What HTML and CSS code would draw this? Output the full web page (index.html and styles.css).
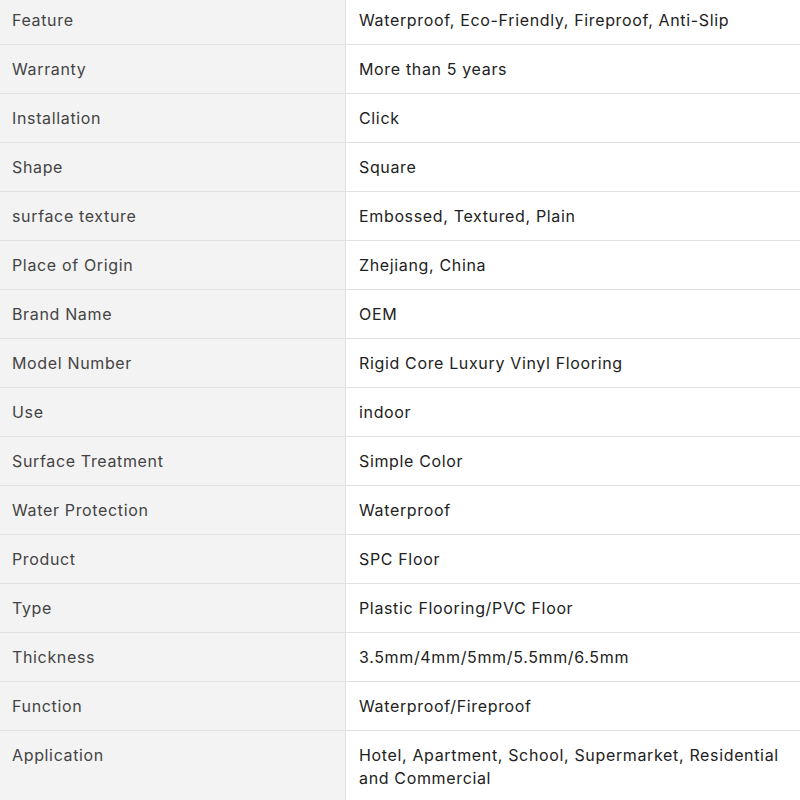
FILE: index.html
```html
<!DOCTYPE html>
<html>
<head>
<meta charset="utf-8">
<link rel="stylesheet" href="styles.css">
</head>
<body>
<table class="spec">
<tbody>
<tr><td class="k">Feature</td><td class="v">Waterproof, Eco-Friendly, Fireproof, Anti-Slip</td></tr>
<tr><td class="k">Warranty</td><td class="v">More than 5 years</td></tr>
<tr><td class="k">Installation</td><td class="v">Click</td></tr>
<tr><td class="k">Shape</td><td class="v">Square</td></tr>
<tr><td class="k">surface texture</td><td class="v">Embossed, Textured, Plain</td></tr>
<tr><td class="k">Place of Origin</td><td class="v">Zhejiang, China</td></tr>
<tr><td class="k">Brand Name</td><td class="v">OEM</td></tr>
<tr><td class="k">Model Number</td><td class="v">Rigid Core Luxury Vinyl Flooring</td></tr>
<tr><td class="k">Use</td><td class="v">indoor</td></tr>
<tr><td class="k">Surface Treatment</td><td class="v">Simple Color</td></tr>
<tr><td class="k">Water Protection</td><td class="v">Waterproof</td></tr>
<tr><td class="k">Product</td><td class="v">SPC Floor</td></tr>
<tr><td class="k">Type</td><td class="v">Plastic Flooring/PVC Floor</td></tr>
<tr><td class="k">Thickness</td><td class="v">3.5mm/4mm/5mm/5.5mm/6.5mm</td></tr>
<tr><td class="k">Function</td><td class="v">Waterproof/Fireproof</td></tr>
<tr><td class="k">Application</td><td class="v">Hotel, Apartment, School, Supermarket, Residential and Commercial</td></tr>
</tbody>
</table>
</body>
</html>
```

FILE: styles.css
```css
html, body {
  margin: 0;
  padding: 0;
  background: #ffffff;
}
body {
  font-family: Inter, "Noto Sans", sans-serif;
  font-size: 16px;
  letter-spacing: 0.65px;
  overflow: hidden;
}
.spec {
  width: 800px;
  border-collapse: collapse;
  margin-top: -5px;
  table-layout: fixed;
}
.spec td {
  border: 1px solid #e1e1e1;
  padding: 12px 12px;
  line-height: 24px;
  vertical-align: top;
  text-align: left;
}
.spec tr td:first-child { border-left: none; }
.spec tr td:last-child { border-right: none; }
.spec tr:nth-child(16) td { line-height: 23px; padding-top: 13px; }
.spec .k {
  width: 321px;
  background: #f3f3f3;
  color: #444444;
}
.spec .v {
  color: #222222;
  padding-left: 13px;
  padding-right: 8px;
}
```
